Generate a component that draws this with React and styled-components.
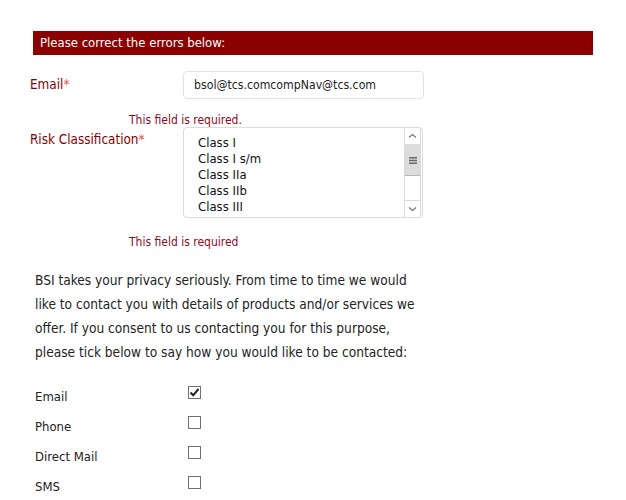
import React from "react";
import styled, { createGlobalStyle } from "styled-components";

const Global = createGlobalStyle`
  html, body { margin: 0; padding: 0; background: #fff; }
  body { font-family: "DejaVu Sans Condensed", "DejaVu Sans", sans-serif; color: #222; }
`;

const Page = styled.div`
  padding: 31px 0 0 30px;
  width: 596px;
`;

const ErrorBar = styled.div`
  margin-left: 3px;
  width: 553px;
  height: 24px;
  padding-left: 7px;
  background: #8b0000;
  color: #fff;
  font-size: 13px;
  line-height: 24px;
`;

const FieldRow = styled.div`
  display: grid;
  grid-template-columns: 153px 241px;
  margin-top: ${(p) => p.$mt || 0}px;
`;

const Label = styled.label`
  color: #8b0000;
  font-size: 13.4px;
  padding-top: ${(p) => p.$pt || 0}px;
  line-height: 16px;
`;

const Star = styled.span`
  color: #e0504a;
`;

const TextInput = styled.div`
  box-sizing: border-box;
  height: 28px;
  border: 1px solid #e2e2e2;
  border-radius: 4px;
  padding-left: 10px;
  font-size: 12.2px;
  line-height: 26px;
  color: #222;
`;

const FieldError = styled.div`
  margin: ${(p) => p.$mt}px 0 0 99px;
  height: 13px;
  line-height: 13px;
  font-size: 12px;
  color: #8b0a1e;
`;

const ListBox = styled.div`
  box-sizing: border-box;
  width: 240px;
  height: 91px;
  border: 1px solid #dcdcdc;
  border-radius: 4px;
  display: flex;
  overflow: hidden;
`;

const Options = styled.div`
  flex: 1;
  padding: 7px 0 0 14px;
  font-size: 13px;
  line-height: 16px;
  color: #111;
  overflow: hidden;
`;

const Scroll = styled.div`
  width: 17px;
  margin: 0 1px 0 0;
  display: flex;
  flex-direction: column;
  border-left: 1px solid #dadada;
  border-right: 1px solid #dadada;
  box-sizing: border-box;
`;

const ArrowBtn = styled.div`
  height: 17px;
  display: flex;
  align-items: center;
  justify-content: center;
  border-bottom: ${(p) => (p.$down ? "none" : "1px solid #dadada")};
  border-top: ${(p) => (p.$down ? "1px solid #dadada" : "none")};
  box-sizing: border-box;
`;

const Thumb = styled.div`
  height: 30px;
  background: #dcdcdc;
  border-bottom: 1px solid #b8b8b8;
  display: flex;
  align-items: center;
  justify-content: center;
`;

const Track = styled.div`
  flex: 1;
`;

const Privacy = styled.p`
  margin: 19px 0 0 5px;
  font-size: 13.6px;
  line-height: 24px;
  color: #222;
`;

const Prefs = styled.div`
  margin: 17px 0 0 5px;
`;

const PrefRow = styled.div`
  display: grid;
  grid-template-columns: 153px 13px;
  align-items: center;
  height: 30px;
  font-size: 13px;
  color: #222;
`;

const Box = styled.div`
  width: 13px;
  height: 13px;
  box-sizing: border-box;
  border: 1px solid #707070;
  background: #fff;
  display: flex;
  align-items: center;
  justify-content: center;
  margin-top: -8px;
`;

const Chevron = ({ down }) => (
  <svg width="9" height="6" viewBox="0 0 9 6">
    <path
      d={down ? "M1 1.5 L4.5 4.5 L8 1.5" : "M1 4.5 L4.5 1.5 L8 4.5"}
      fill="none"
      stroke="#777"
      strokeWidth="1.2"
    />
  </svg>
);

const Grip = () => (
  <svg width="8" height="7" viewBox="0 0 8 7">
    <rect x="0" y="0" width="8" height="1.5" fill="#666" />
    <rect x="0" y="2.75" width="8" height="1.5" fill="#666" />
    <rect x="0" y="5.5" width="8" height="1.5" fill="#666" />
  </svg>
);

const Check = () => (
  <svg width="11" height="11" viewBox="0 0 11 11">
    <path d="M1.5 5.5 L4.2 8.3 L9.5 2" fill="none" stroke="#222" strokeWidth="2" />
  </svg>
);

const options = ["Class I", "Class I s/m", "Class IIa", "Class IIb", "Class III", "IVD Annex"];
const prefs = [
  { name: "Email", checked: true },
  { name: "Phone" },
  { name: "Direct Mail" },
  { name: "SMS" },
];

export default function App() {
  return (
    <Page>
      <Global />
      <ErrorBar>Please correct the errors below:</ErrorBar>
      <FieldRow $mt={16}>
        <Label $pt={6}>
          Email<Star>*</Star>
        </Label>
        <TextInput>bsol@tcs.comcompNav@tcs.com</TextInput>
      </FieldRow>
      <FieldError $mt={15}>This field is required.</FieldError>
      <FieldRow>
        <Label $pt={5}>
          Risk Classification<Star>*</Star>
        </Label>
        <ListBox>
          <Options>
            {options.map((o) => (
              <div key={o}>{o}</div>
            ))}
          </Options>
          <Scroll>
            <ArrowBtn>
              <Chevron />
            </ArrowBtn>
            <Thumb>
              <Grip />
            </Thumb>
            <Track />
            <ArrowBtn $down>
              <Chevron down />
            </ArrowBtn>
          </Scroll>
        </ListBox>
      </FieldRow>
      <FieldError $mt={18}>This field is required</FieldError>
      <Privacy>
        BSI takes your privacy seriously. From time to time we would
        <br />
        like to contact you with details of products and/or services we
        <br />
        offer. If you consent to us contacting you for this purpose,
        <br />
        please tick below to say how you would like to be contacted:
      </Privacy>
      <Prefs>
        {prefs.map((p) => (
          <PrefRow key={p.name}>
            <span>{p.name}</span>
            <Box>{p.checked && <Check />}</Box>
          </PrefRow>
        ))}
      </Prefs>
    </Page>
  );
}
